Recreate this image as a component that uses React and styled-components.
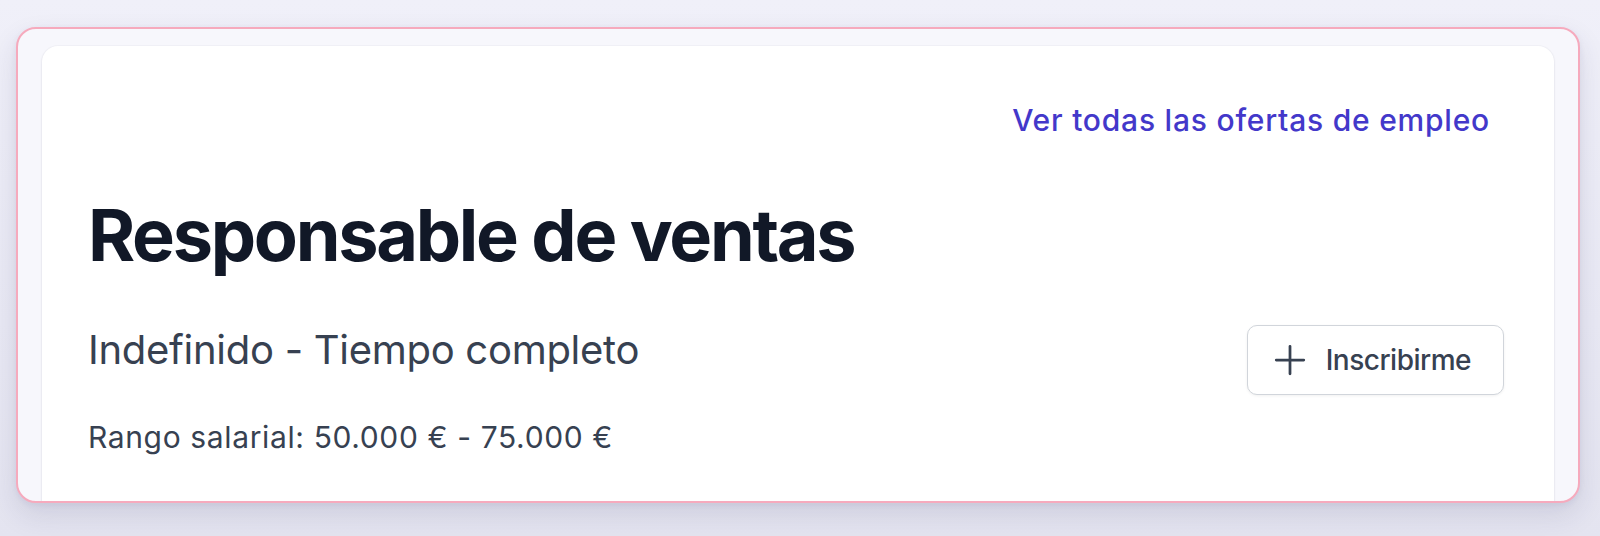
import React from "react";
import styled, { createGlobalStyle } from "styled-components";

const GlobalStyle = createGlobalStyle`
  html, body {
    margin: 0;
    padding: 0;
  }
  body {
    min-height: 536px;
    background: linear-gradient(180deg, #f0f0f9 0%, #e9e9f4 60%, #e4e4f0 100%);
    font-family: Inter, "Noto Sans", "Liberation Sans", sans-serif;
    -webkit-font-smoothing: antialiased;
  }
`;

const Page = styled.div`
  padding: 27px 20px 0 16px;
  height: 536px;
  box-sizing: border-box;
  overflow: hidden;
`;

const Frame = styled.div`
  box-sizing: border-box;
  height: 476px;
  border: 2px solid #f6aabd;
  border-radius: 20px;
  background: #f7f7fc;
  padding: 17px 24px 0 24px;
  overflow: hidden;
  box-shadow: 0 12px 28px rgba(40, 40, 90, 0.12), 0 2px 6px rgba(40, 40, 90, 0.06);
`;

const Card = styled.section`
  background: #ffffff;
  border-radius: 16px;
  box-shadow: 0 1px 3px rgba(20, 20, 60, 0.08), 0 0 0 1px rgba(20, 20, 60, 0.02);
  padding: 54px 50px 80px 46px;
  display: flex;
  flex-direction: column;
`;

const TopBar = styled.div`
  display: flex;
  justify-content: flex-end;
  padding-right: 14px;
`;

const AllJobsLink = styled.a`
  font-size: 30px;
  line-height: 40px;
  font-weight: 500;
  letter-spacing: 0.026em;
  color: #4338ca;
  text-decoration: none;
  cursor: pointer;
`;

const Title = styled.h1`
  margin: 55px 0 0 0;
  font-size: 72px;
  line-height: 80px;
  font-weight: 700;
  letter-spacing: -0.032em;
  color: #111827;
`;

const MetaRow = styled.div`
  margin-top: 50px;
  display: flex;
  align-items: flex-start;
  justify-content: space-between;
`;

const Contract = styled.p`
  margin: 0;
  font-size: 40px;
  line-height: 50px;
  font-weight: 400;
  letter-spacing: -0.007em;
  color: #374151;
`;

const Salary = styled.p`
  margin: 22px 0 0 0;
  font-size: 30px;
  line-height: 40px;
  font-weight: 400;
  letter-spacing: 0.021em;
  color: #374151;
`;

const ActionButton = styled.button`
  display: inline-flex;
  align-items: center;
  gap: 14px;
  height: 70px;
  box-sizing: border-box;
  padding: 0 32px 0 20px;
  background: #ffffff;
  border: 1.5px solid #d1d5db;
  border-radius: 10px;
  box-shadow: 0 1px 3px rgba(0, 0, 0, 0.06);
  font-family: inherit;
  font-size: 28px;
  font-weight: 500;
  letter-spacing: -0.018em;
  color: #374151;
  cursor: pointer;
`;

const PlusIcon = () => (
  <svg width="44" height="44" viewBox="0 0 24 24" fill="none" stroke="#374151" strokeWidth="1.5" strokeLinecap="round" strokeLinejoin="round" aria-hidden="true">
    <path d="M12 4.5v15m7.5-7.5h-15" />
  </svg>
);

export default function App() {
  return (
    <>
      <GlobalStyle />
      <Page>
        <Frame>
          <Card>
            <TopBar>
              <AllJobsLink>Ver todas las ofertas de empleo</AllJobsLink>
            </TopBar>
            <Title>Responsable de ventas</Title>
            <MetaRow>
              <Contract>Indefinido - Tiempo completo</Contract>
              <ActionButton>
                <PlusIcon />
                Inscribirme
              </ActionButton>
            </MetaRow>
            <Salary>Rango salarial: 50.000 € - 75.000 €</Salary>
          </Card>
        </Frame>
      </Page>
    </>
  );
}
